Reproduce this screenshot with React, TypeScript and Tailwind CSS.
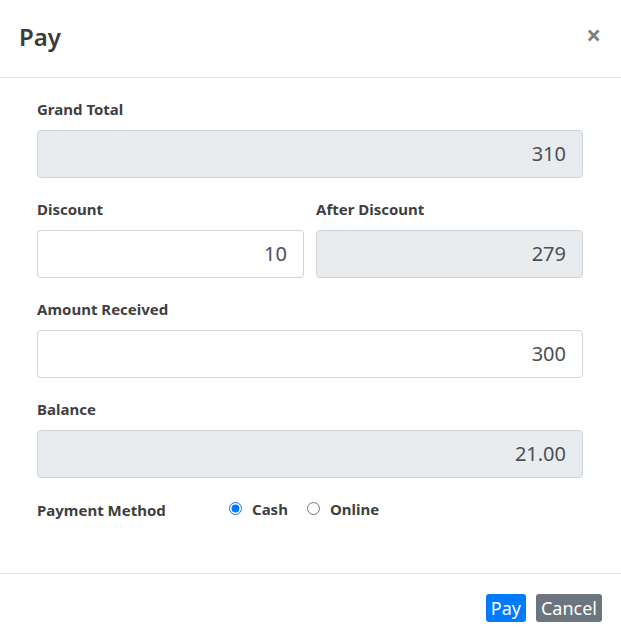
import { FC } from "react";

const Field: FC<{ label: string; value: string; disabled?: boolean }> = ({ label, value, disabled }) => {
    return (
        <div className="flex flex-col">
            <label className="mb-[10px] text-[15px] font-bold leading-[21px] text-[#3f3f3f]">{label}</label>
            <input
                readOnly
                value={value}
                className={`h-[48px] w-full rounded-[4px] border border-[#ced4da] px-[16px] pb-[2px] text-right text-[20px] text-[#495057] outline-none ${disabled ? "bg-[#e9ecef]" : "bg-white"}`}
            />
        </div>
    );
};

export default function App() {
    return (
        <div className="h-[640px] w-[621px] bg-white font-['Noto_Sans',sans-serif] text-[#212529]">
            <div className="flex h-[78px] items-center justify-between border-b border-[#dee2e6] pl-[19px] pr-[20px]">
                <div className="pb-[3px] text-[24px] font-semibold text-[#3b3b3b]">Pay</div>
                <div className="pb-[8px] text-[26px] font-bold leading-none text-[#808080]">×</div>
            </div>

            <div className="flex h-[496px] flex-col gap-[21px] border-b border-[#dee2e6] pl-[37px] pr-[38px] pt-[21px]">
                <Field label="Grand Total" value="310" disabled />
                <div className="grid grid-cols-2 gap-[12px]">
                    <Field label="Discount" value="10" />
                    <Field label="After Discount" value="279" disabled />
                </div>
                <Field label="Amount Received" value="300" />
                <Field label="Balance" value="21.00" disabled />
                <div className="-mt-[3px] flex items-center">
                    <div className="w-[192px] pt-[3px] text-[15px] font-bold text-[#3f3f3f]">Payment Method</div>
                    <label className="flex items-center gap-[10px] text-[15px] font-bold text-[#3f3f3f]">
                        <input type="radio" name="method" defaultChecked className="m-0 h-[13px] w-[13px] accent-[#0075ff]" />
                        Cash
                    </label>
                    <label className="ml-[19px] flex items-center gap-[10px] text-[15px] font-bold text-[#3f3f3f]">
                        <input type="radio" name="method" className="m-0 h-[13px] w-[13px]" />
                        Online
                    </label>
                </div>
            </div>

            <div className="flex justify-end gap-[10px] pr-[19px] pt-[20px]">
                <button className="h-[28px] rounded-[3px] bg-[#007bff] px-[5px] text-[18px] leading-[28px] text-white">Pay</button>
                <button className="h-[28px] rounded-[3px] bg-[#6c757d] px-[5px] text-[18px] leading-[28px] text-white">Cancel</button>
            </div>
        </div>
    );
}
